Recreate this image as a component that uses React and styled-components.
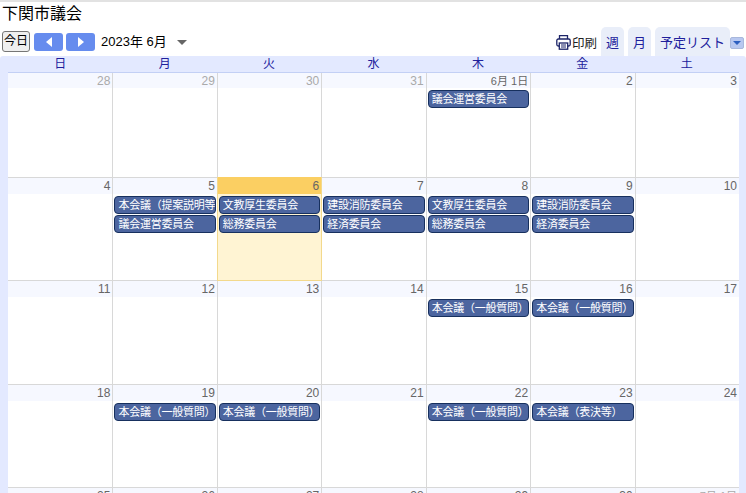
import React from 'react';
import styled, { createGlobalStyle } from 'styled-components';

const GlobalStyle = createGlobalStyle`
  html, body {
    margin: 0;
    padding: 0;
    background: #fff;
    overflow: hidden;
  }
  body {
    font-family: 'Liberation Sans', 'Noto Sans CJK JP', sans-serif;
  }
`;

const WEEKDAYS = ['日', '月', '火', '水', '木', '金', '土'];

const WEEKS = [
  {
    height: 105,
    days: ['28', '29', '30', '31', '6月 1日', '2', '3'],
    muted: [0, 1, 2, 3],
    events: { 4: ['議会運営委員会'] },
  },
  {
    height: 103,
    days: ['4', '5', '6', '7', '8', '9', '10'],
    today: 2,
    events: {
      1: ['本会議（提案説明等）', '議会運営委員会'],
      2: ['文教厚生委員会', '総務委員会'],
      3: ['建設消防委員会', '経済委員会'],
      4: ['文教厚生委員会', '総務委員会'],
      5: ['建設消防委員会', '経済委員会'],
    },
  },
  {
    height: 104,
    days: ['11', '12', '13', '14', '15', '16', '17'],
    events: { 4: ['本会議（一般質問）'], 5: ['本会議（一般質問）'] },
  },
  {
    height: 103,
    days: ['18', '19', '20', '21', '22', '23', '24'],
    events: {
      1: ['本会議（一般質問）'],
      2: ['本会議（一般質問）'],
      4: ['本会議（一般質問）'],
      5: ['本会議（表決等）'],
    },
  },
  {
    height: 104,
    days: ['25', '26', '27', '28', '29', '30', '7月 1日'],
    muted: [6],
    events: {},
  },
];

const Page = styled.div`
  width: 746px;
  height: 493px;
  overflow: hidden;
  border-top: 2px solid #e2e2e2;
  box-sizing: border-box;
`;

const Title = styled.div`
  height: 24px;
  padding-left: 2px;
  font-size: 16px;
  line-height: 24px;
  color: #000;
`;

const Toolbar = styled.div`
  display: flex;
  align-items: flex-end;
  height: 30px;
  padding-left: 2px;
`;

const TodayButton = styled.button`
  width: 28px;
  height: 21px;
  margin: 0 0 4px 0;
  padding: 0;
  border: 1px solid #767676;
  border-radius: 3px;
  background: #efefef;
  color: #000;
  font-family: inherit;
  font-size: 12px;
  line-height: 17px;
`;

const NavButton = styled.button`
  display: flex;
  align-items: center;
  justify-content: center;
  width: 29px;
  height: 18px;
  margin: 0 0 5px ${(props) => props.$gap}px;
  padding: 0;
  border: none;
  border-radius: 3px;
  background: #668cee;
`;

const RangeLabel = styled.div`
  margin: 0 0 5px 6px;
  font-size: 13px;
  line-height: 18px;
  color: #000;
`;

const MenuCaret = styled.div`
  width: 0;
  height: 0;
  margin: 0 0 11px 10px;
  border-left: 5px solid transparent;
  border-right: 5px solid transparent;
  border-top: 5px solid #666;
`;

const Spacer = styled.div`
  flex: 1;
`;

const PrintLink = styled.div`
  display: flex;
  align-items: center;
  gap: 1px;
  height: 18px;
  margin: 0 4px 5px 0;
  font-size: 12.5px;
  color: #222;
`;

const Tab = styled.div`
  height: 29px;
  margin-left: ${(props) => props.$gap}px;
  padding: 0 ${(props) => props.$pad}px;
  border-radius: 5px 5px 0 0;
  background: #e9eef9;
  color: #20209c;
  font-size: 13px;
  line-height: 31px;
`;

const ListCaret = styled.div`
  display: flex;
  align-items: center;
  justify-content: center;
  width: 12px;
  height: 10px;
  margin: 0 2px 7px 0;
  border: 1px solid #a9b8dc;
  border-radius: 2px;
  background: #b8c8f0;
  &::after {
    content: '';
    border-left: 4px solid transparent;
    border-right: 4px solid transparent;
    border-top: 4px solid #2c5fc0;
  }
`;

const Panel = styled.div`
  height: 437px;
  padding: 0 7px 0 8px;
  border-radius: 3px 3px 0 0;
  background: #e3e9ff;
`;

const HeaderRow = styled.div`
  display: grid;
  grid-template-columns: repeat(7, 1fr);
  height: 17px;
  border-bottom: 1px solid #c3d0f5;
  box-sizing: border-box;
`;

const HeaderCell = styled.div`
  font-size: 12px;
  line-height: 16px;
  text-align: center;
  color: #20209c;
`;

const WeekRow = styled.div`
  display: grid;
  grid-template-columns: repeat(7, 1fr);
  height: ${(props) => props.$height}px;
  border-bottom: 1px solid #d8d8d8;
  box-sizing: border-box;
  background: #fff;
`;

const DayCell = styled.div`
  position: relative;
  z-index: ${(props) => (props.$today ? 1 : 0)};
  min-width: 0;
  margin: ${(props) => (props.$today ? '-1px 0' : '0')};
  border-left: 1px solid ${(props) => (props.$today ? '#f3d98c' : '#d8d8d8')};
  border-bottom: ${(props) => (props.$today ? '1px solid #f3d98c' : 'none')};
  box-sizing: border-box;
  background: ${(props) => (props.$today ? '#fff4d3' : '#fff')};
  box-shadow: ${(props) => (props.$today ? '1px 0 0 #f3d98c' : 'none')};
  &:first-child {
    border-left: none;
  }
`;

const DayNumber = styled.div`
  height: ${(props) => (props.$first ? 15 : props.$today ? 17 : 16)}px;
  padding-right: 2px;
  background: ${(props) => (props.$today ? '#fbcf62' : '#f6f8ff')};
  color: ${(props) => (props.$muted ? '#aaa' : '#666')};
  font-size: ${(props) => (props.$long ? 11 : 12)}px;
  line-height: ${(props) => (props.$today ? 19 : 17)}px;
  text-align: right;
`;

const EventList = styled.div`
  display: flex;
  flex-direction: column;
  gap: 1px;
  padding: 2px 1px 0 1px;
`;

const EventChip = styled.div`
  height: 18px;
  padding: 0 0 0 3px;
  overflow: hidden;
  border: 1px solid #17305e;
  border-radius: 4px;
  box-sizing: border-box;
  background: #4c659f;
  color: #fff;
  font-size: 11px;
  letter-spacing: -0.25px;
  line-height: 16px;
  white-space: nowrap;
`;

const Triangle = ({ flip }) => (
  <svg width="6" height="10" viewBox="0 0 6 10" style={{ transform: flip ? 'scaleX(-1)' : 'none' }}>
    <path d="M0 5 6 0v10z" fill="#fff" />
  </svg>
);

const PrinterIcon = () => (
  <svg width="15" height="16" viewBox="0 0 15 16" fill="none" stroke="#1c2468" strokeWidth="1.3">
    <path d="M3.5 5V1.7h8V5" />
    <rect x="0.8" y="5" width="13.4" height="7" rx="1.5" />
    <rect x="3.3" y="9" width="8.4" height="6.2" fill="#fff" />
    <path d="M5 11h5M5 13h5" strokeWidth="1" />
  </svg>
);

export default function App() {
  return (
    <Page>
      <GlobalStyle />
      <Title>下関市議会</Title>
      <Toolbar>
        <TodayButton>今日</TodayButton>
        <NavButton $gap={4}><Triangle /></NavButton>
        <NavButton $gap={3}><Triangle flip /></NavButton>
        <RangeLabel>2023年 6月</RangeLabel>
        <MenuCaret />
        <Spacer />
        <PrintLink><PrinterIcon />印刷</PrintLink>
        <Tab $gap={0} $pad={5}>週</Tab>
        <Tab $gap={4} $pad={5}>月</Tab>
        <Tab $gap={4} $pad={5}>予定リスト</Tab>
        <ListCaret />
      </Toolbar>
      <Panel>
        <HeaderRow>
          {WEEKDAYS.map((day) => (
            <HeaderCell key={day}>{day}</HeaderCell>
          ))}
        </HeaderRow>
        {WEEKS.map((week, w) => (
          <WeekRow key={week.days[0]} $height={week.height}>
            {week.days.map((day, i) => (
              <DayCell key={day} $today={week.today === i}>
                <DayNumber
                  $first={w === 0}
                  $today={week.today === i}
                  $muted={week.muted && week.muted.includes(i)}
                  $long={day.length > 2}
                >
                  {day}
                </DayNumber>
                {week.events[i] && (
                  <EventList>
                    {week.events[i].map((title) => (
                      <EventChip key={title}>{title}</EventChip>
                    ))}
                  </EventList>
                )}
              </DayCell>
            ))}
          </WeekRow>
        ))}
      </Panel>
    </Page>
  );
}
